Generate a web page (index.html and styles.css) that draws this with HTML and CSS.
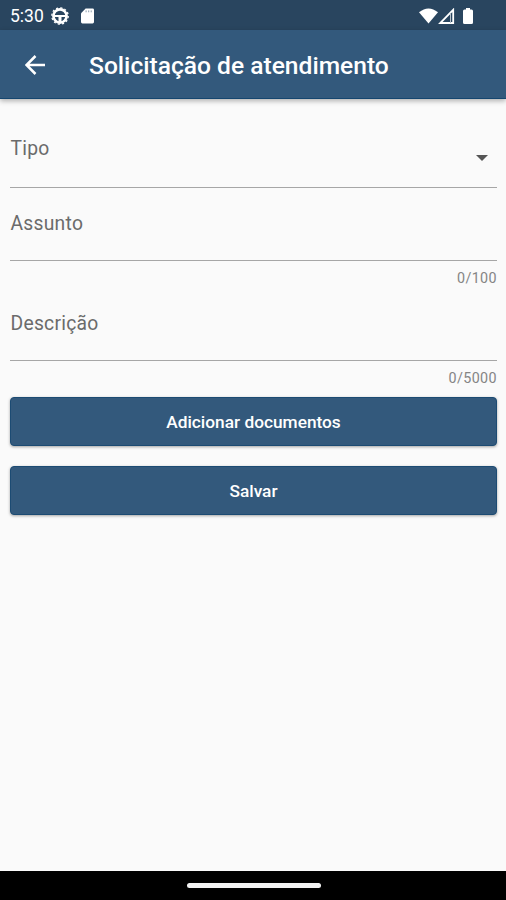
FILE: index.html
```html
<!DOCTYPE html>
<html lang="pt-BR">
<head>
    <meta charset="UTF-8">
    <meta name="viewport" content="width=device-width, initial-scale=1.0">
    <title>Solicitação de atendimento</title>
    <link rel="stylesheet" href="styles.css">
</head>
<body>
    <div class="status-bar">
        <span class="clock">5:30</span>
        <svg class="icon-wheel" width="18" height="18" viewBox="0 0 18 18">
            <circle cx="9" cy="9" r="6.600" fill="none" stroke="#fff" stroke-width="2.600"/>
            <circle cx="9" cy="9" r="8.200" fill="none" stroke="#fff" stroke-width="1.300" stroke-dasharray="2.15 2.14"/>
            <path d="M3 8h12v2h-4.500v5h-3v-5H3z" fill="#fff"/>
        </svg>
        <svg class="icon-card" width="13" height="16" viewBox="0 0 14 16">
            <path d="M5 0h7.500Q14 0 14 1.500v13q0 1.500-1.500 1.500h-11Q0 16 0 14.500V5z" fill="#fff"/>
            <path d="M5.500 2v2M8.300 2v2M11 2v2" stroke="#8294a4" stroke-width="1"/>
        </svg>
        <div class="signals">
            <svg width="19" height="16" viewBox="0 0 20 16">
                <path d="M0 4Q10-4 20 4L10 16z" fill="#fff"/>
            </svg>
            <svg width="18" height="16" viewBox="0 0 18 16">
                <path d="M15.200 1.800v13.200H2.200z" fill="none" stroke="#fff" stroke-width="1.800"/>
                <path d="M12.500 5v10" stroke="#b4c0ca" stroke-width="1"/>
            </svg>
            <svg class="icon-battery" width="10" height="16" viewBox="0 0 10 16">
                <path d="M3 0h4v1.500h1.500Q10 1.500 10 3v11.500q0 1.500-1.500 1.500h-7Q0 16 0 14.500V3q0-1.500 1.500-1.500H3z" fill="#fff"/>
            </svg>
        </div>
    </div>

    <header class="app-bar">
        <svg class="back" width="20" height="20" viewBox="0 0 20 20">
            <path d="M20 10H1.800M10.500 1L1.500 10l9 9" fill="none" stroke="#fff" stroke-width="2.500"/>
        </svg>
        <h1>Solicitação de atendimento</h1>
    </header>

    <main class="form">
        <div class="field field-select">
            <label>Tipo</label>
            <span class="arrow"></span>
        </div>
        <div class="field">
            <label>Assunto</label>
        </div>
        <div class="counter">0/100</div>
        <div class="field">
            <label>Descrição</label>
        </div>
        <div class="counter">0/5000</div>
        <button class="btn">Adicionar documentos</button>
        <button class="btn">Salvar</button>
    </main>

    <div class="nav-bar">
        <div class="handle"></div>
    </div>
</body>
</html>
```

FILE: styles.css
```css
* {
    box-sizing: border-box;
}
body {
    font-family: Roboto, 'Liberation Sans', sans-serif;
    margin: 0;
    height: 100vh;
    display: flex;
    flex-direction: column;
    background-color: #fafafa;
    overflow: hidden;
}
.status-bar {
    height: 30px;
    display: flex;
    align-items: center;
    padding: 1px 33px 0 10px;
    background-color: #29455f;
    color: #fff;
}
.clock {
    width: 41px;
    padding-top: 1px;
    font-size: 17.5px;
}
.icon-card {
    margin-left: 12px;
}
.signals {
    display: flex;
    margin-left: auto;
}
.icon-battery {
    margin-left: 7px;
}
.app-bar {
    height: 69px;
    display: flex;
    align-items: center;
    padding: 1px 25px 0;
    background-color: #33597c;
    border-bottom: 1px solid #15466f;
    color: #fff;
    box-shadow: 0 2px 5px rgba(0, 0, 0, 0.3);
}
h1 {
    margin: 1px 0 0 44px;
    font-size: 24.6px;
    font-weight: 500;
    white-space: nowrap;
}
.form {
    flex: 1;
    padding: 27px 9px 0 10px;
}
.field {
    height: 73px;
    padding: 24px 0 0 0.5px;
    border-bottom: 1px solid #a6a6a6;
    color: #6b6b6b;
    font-size: 19.3px;
    line-height: 24px;
    letter-spacing: 0.25px;
}
.field-select {
    height: 62px;
    padding-top: 11px;
    display: flex;
    justify-content: space-between;
}
.arrow {
    margin: 18px 9px 0 0;
    width: 12px;
    height: 6px;
    background-color: #555;
    clip-path: polygon(0 0, 100% 0, 50% 100%);
}
.counter {
    height: 27px;
    padding-top: 8px;
    color: #858585;
    font-size: 14.3px;
    line-height: 18px;
    letter-spacing: 0.4px;
    text-align: right;
}
.btn {
    display: block;
    width: 100%;
    height: 49px;
    margin: 9px 0 20px;
    padding: 0;
    border: 1px solid #1c4b73;
    border-radius: 4px;
    background-color: #33597c;
    color: #fff;
    font-family: inherit;
    font-size: 17.3px;
    font-weight: 500;
    box-shadow: 0 1px 3px rgba(0, 0, 0, 0.35);
}
.btn + .btn {
    margin-top: 0;
}
.nav-bar {
    height: 29px;
    display: flex;
    align-items: center;
    justify-content: center;
    padding-left: 1px;
    background-color: #000;
}
.handle {
    width: 134px;
    height: 5px;
    border-radius: 3px;
    background-color: #f2f2f2;
}
```
